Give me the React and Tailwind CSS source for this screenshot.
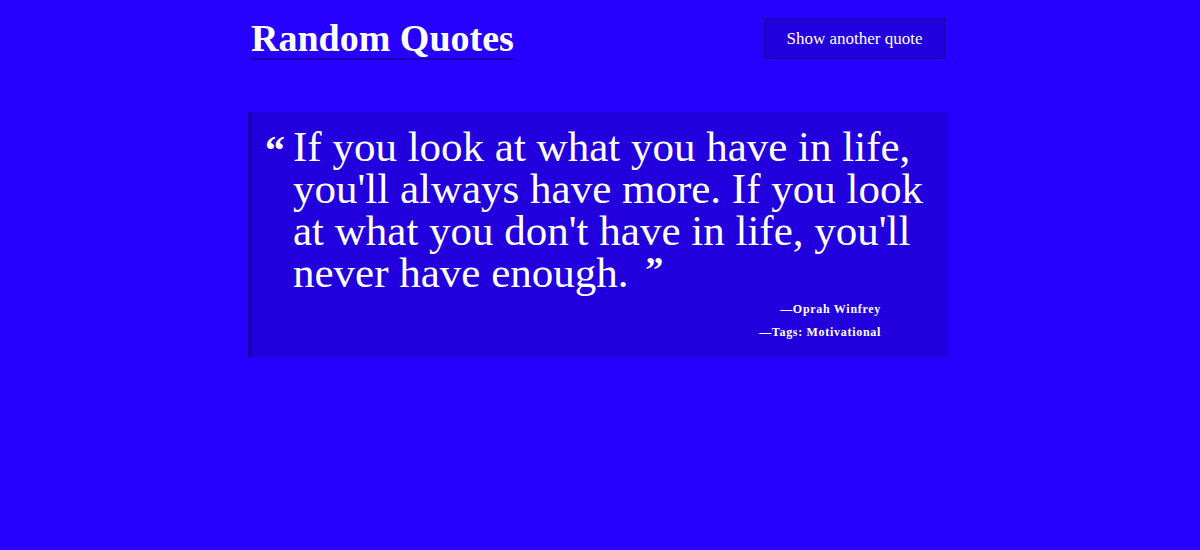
export default function App() {
    return (
        <div className="min-h-screen w-full bg-[#2600fc] text-white" style={{ fontFamily: '"Liberation Serif", "DejaVu Serif", serif' }}>
            <div className="w-[704px] mx-auto">
                <header className="flex items-start justify-between pt-[18px]">
                    <h1 className="ml-[3px] mt-[2px] text-[38px] leading-[37px] font-bold border-b-2 border-[#1c00b8] pb-[1px]">
                        Random Quotes
                    </h1>
                    <button className="mr-[7px] w-[181px] h-[41px] bg-[#2200dd] border border-[#1a00a8] text-[17px] text-white">
                        Show another quote
                    </button>
                </header>

                <blockquote className="w-[700px] mt-[52px] bg-[#2200dd] border-l-4 border-[#1a00b0] pt-[14px] pb-[13px]">
                    <div className="flex">
                        <span className="w-[41px] shrink-0 text-right pr-[8px] text-[40px] leading-[50px] font-bold">&ldquo;</span>
                        <p className="w-[650px] text-[43px] leading-[42px]">
                            If you look at what you have in life,<br />
                            you'll always have more. If you look<br />
                            at what you don't have in life, you'll<br />
                            never have enough. <span className="ml-[6px] font-bold text-[36px] leading-none align-top">&rdquo;</span>
                        </p>
                    </div>
                    <div className="mt-[4px] pr-[67px] text-right text-[12px] leading-[23px] font-bold tracking-[0.7px]">
                        <div>&mdash;Oprah Winfrey</div>
                        <div>&mdash;Tags: Motivational</div>
                    </div>
                </blockquote>
            </div>
        </div>
    );
}
